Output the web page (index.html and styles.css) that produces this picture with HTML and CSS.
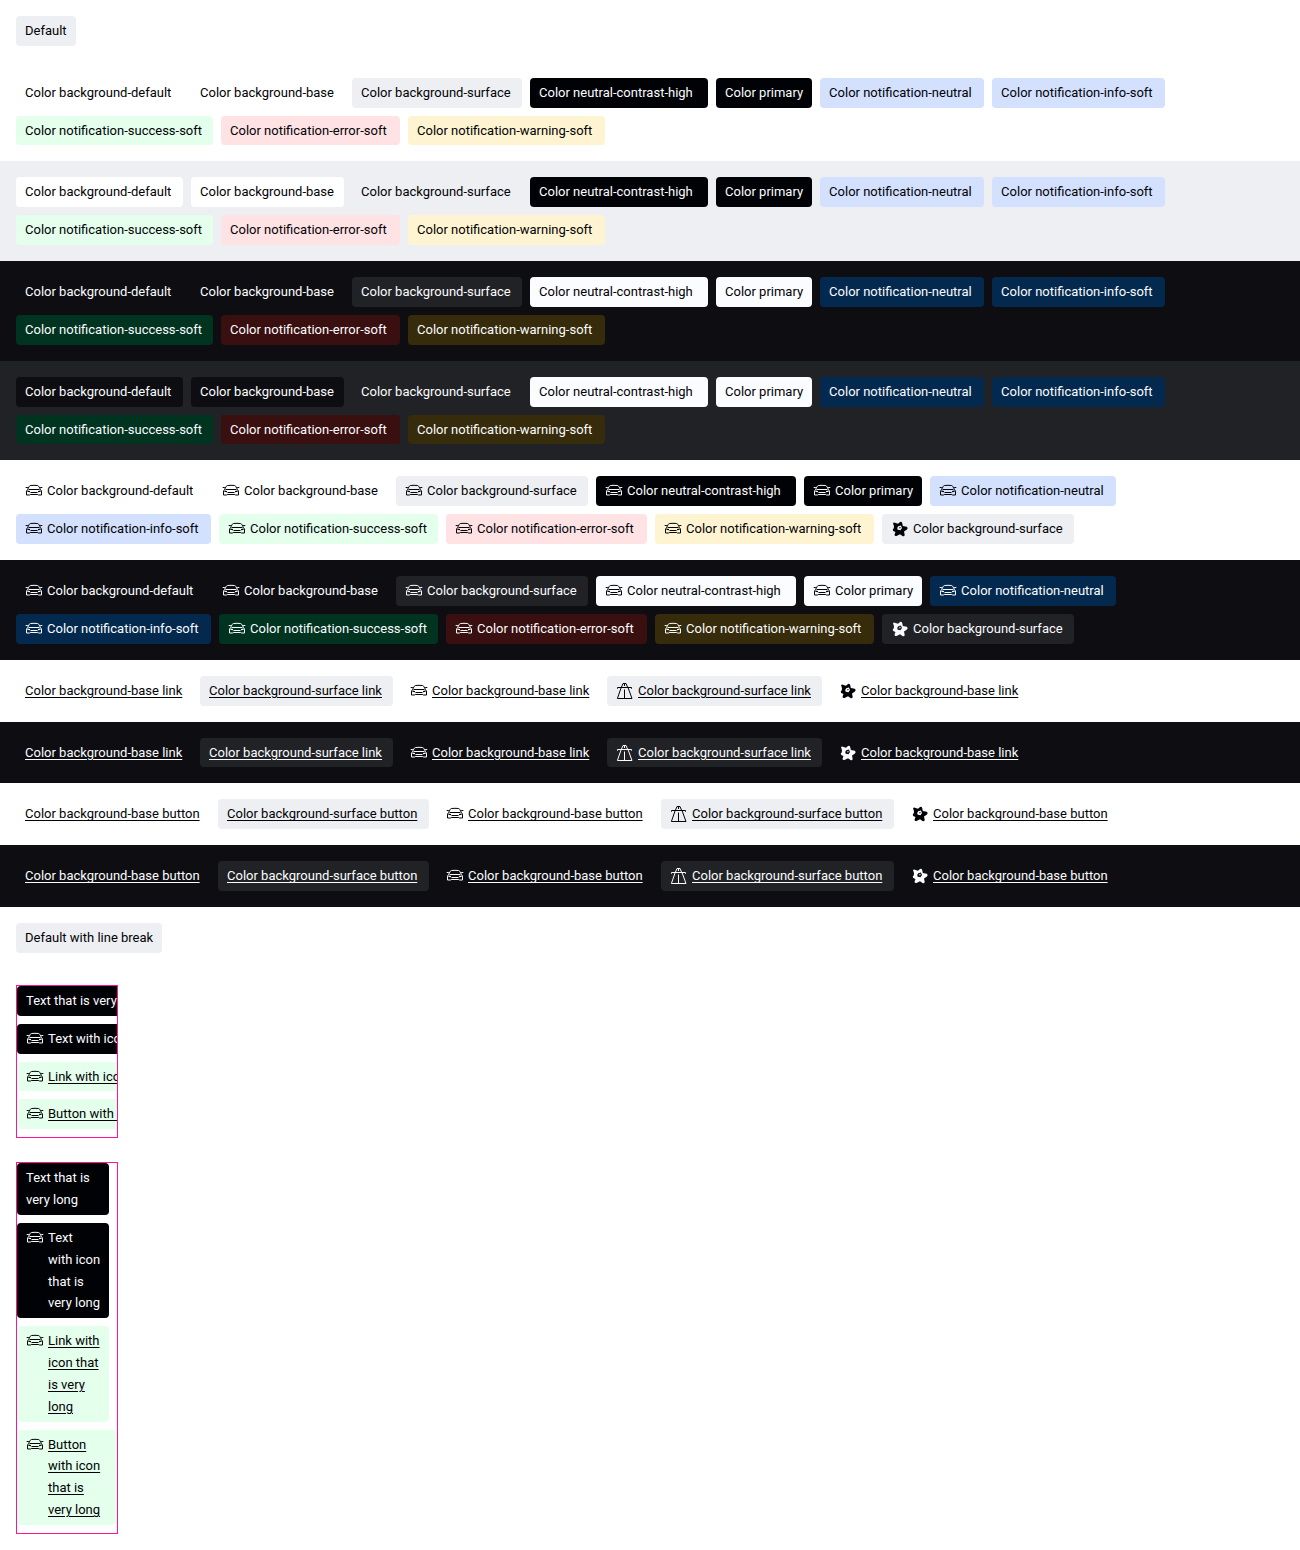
FILE: index.html
```html
<!DOCTYPE html>
<html lang="en">
<head>
<meta charset="utf-8">
<meta name="viewport" content="width=device-width, initial-scale=1">
<title>Tag</title>
<link rel="stylesheet" href="styles.css">
</head>
<body>
<svg class="sprite" aria-hidden="true">
  <symbol id="car" viewBox="0 0 18 18">
    <path d="M2.500 7.500 4.200 4.500Q4.500 3.700 5.500 3.500Q9 3.100 12.500 3.500Q13.500 3.700 13.800 4.500L15.500 7.500M.7 5.500H2.800M17.300 5.500H15.200M3.500 7.500H14.500M2.500 7.500Q1.500 8.500 1.500 10V13H4.500L5.200 12.500H12.800L13.500 13H16.500V10Q16.500 8.500 15.500 7.500M5.500 10.500H12.500" fill="none" stroke="currentColor"/>
    <path d="M2.400 8.400 5 9.100V10.200L2.300 9.700ZM15.600 8.400 13 9.100V10.200L15.700 9.700Z" fill="currentColor"/>
  </symbol>
  <symbol id="highway" viewBox="0 0 18 18">
    <path d="M1.500 6.700V5.500H15.500V6.700M5.200 5.500 1.400 16.500H16L12 5.500M5.300 5.500 7 1.500H10L11.700 5.500M8.500 2V4M8.500 7.500V16.500" fill="none" stroke="currentColor"/>
  </symbol>
  <symbol id="star" viewBox="0 0 18 18">
    <path fill="currentColor" fill-rule="evenodd" d="M2 3Q3 1.900 4.500 3L7 3.700 9 2Q11 1 11.300 3.500L11.800 6 15.800 6.800Q17.500 8 16 9.500L13 11.500 13.700 15Q13.200 17 11.500 16L9 14.300 5.500 16Q3.200 16.300 3.600 14.200L4.500 12 2.200 11Q1 9.500 2.800 8.300L3 6.300ZM7.200 6.300 9.900 5.600 11 8 9.500 10.300 6.700 9.700 6.200 8ZM8.200 7.200 9.400 7 9.600 8.100 8.500 8.500Z"/>
  </symbol>
</svg>
<main id="stage"></main>
<script src="tags.js"></script>
</body>
</html>
```
FILE: tags.js
```js
const COLORS = [
  'background-default', 'background-base', 'background-surface', 'neutral-contrast-high', 'primary',
  'notification-neutral', 'notification-info-soft', 'notification-success-soft',
  'notification-error-soft', 'notification-warning-soft'
];

const icon = name => name ? `<svg class="icon" aria-hidden="true"><use href="#${name}"/></svg>` : '';

function tag(label, color = 'background-surface', iconName = '', kind = 'text') {
  const body = {
    text: `<span class="label">${label}</span>`,
    link: `<a class="label" href="#">${label}</a>`,
    button: `<button class="label" type="button">${label}</button>`
  }[kind];
  return `<span class="tag ${color} tag-${kind}">${icon(iconName)}${body}</span>`;
}

const row = (theme, tags) => `<section class="row ${theme}">${tags.join('')}</section>`;
const swatches = (theme, tags) => row('swatches ' + theme, tags);
const plain = () => COLORS.map(c => tag('Color ' + c, c));
const withIcons = () => [
  ...COLORS.map(c => tag('Color ' + c, c, 'car')),
  tag('Color background-surface', 'background-surface', 'star')
];
const interactive = kind => [
  ['base', ''], ['surface', ''], ['base', 'car'], ['surface', 'highway'], ['base', 'star']
].map(([c, i]) => tag(`Color background-${c} ${kind}`, 'background-' + c, i, kind));
const longTags = () => [
  tag('Text that is very long', 'primary'),
  tag('Text with&nbsp;icon that is very long', 'primary', 'car'),
  tag('Link with icon that is very long', 'notification-success-soft', 'car', 'link'),
  tag('Button with icon that is very long', 'notification-success-soft', 'car', 'button')
].join('');

document.getElementById('stage').innerHTML = [
  row('light', [tag('Default')]),
  swatches('light', plain()),
  swatches('light on-surface', plain()),
  swatches('dark', plain()),
  swatches('dark on-surface', plain()),
  swatches('light', withIcons()),
  swatches('dark', withIcons()),
  swatches('light', interactive('link')),
  swatches('dark', interactive('link')),
  swatches('light', interactive('button')),
  swatches('dark', interactive('button')),
  row('light', [tag('Default with line break')]),
  `<section class="stack light">
    <div class="box nowrap">${longTags()}</div>
    <div class="box">${longTags()}</div>
  </section>`
].join('');
```
FILE: styles.css
```css
*, *::before, *::after { box-sizing: border-box; }

body {
  margin: 0;
  background: #fff;
  font-family: Roboto, "Liberation Sans", sans-serif;
  font-size: 13px;
  line-height: 1.68;
}

.sprite { position: absolute; width: 0; height: 0; }

.light {
  --base: #fff;
  --surface: #eeeff2;
  --primary: #010205;
  --inverse: #fbfcff;
  --info: #d3e1ff;
  --success: #e4ffec;
  --error: #ffe2e4;
  --warning: #fff4d2;
}

.dark {
  --base: #0e0e12;
  --surface: #212225;
  --primary: #fbfcff;
  --inverse: #010205;
  --info: #04294e;
  --success: #003320;
  --error: #3a0f0f;
  --warning: #362b0a;
}

.row {
  display: flex;
  flex-wrap: wrap;
  gap: 8px;
  padding: 16px;
  background: var(--base);
}

.on-surface { background: var(--surface); }

.tag {
  display: flex;
  align-items: flex-start;
  gap: 4px;
  padding: 4px 9px;
  border-radius: 4px;
  color: var(--primary);
  white-space: nowrap;
}

.background-default, .background-base { background: var(--base); }
.background-surface { background: var(--surface); }
.neutral-contrast-high, .primary { background: var(--primary); color: var(--inverse); }
.notification-neutral, .notification-info-soft { background: var(--info); }
.notification-success-soft { background: var(--success); }
.notification-error-soft { background: var(--error); }
.notification-warning-soft { background: var(--warning); }

.icon {
  flex: none;
  width: 18px;
  height: 18px;
  margin-top: 2px;
}

.label { color: inherit; }

.swatches .background-default .label { min-width: 149px; }
.swatches .background-base .label { min-width: 135px; }
.swatches .background-surface .label { min-width: 152px; }
.swatches .neutral-contrast-high .label { min-width: 160px; }
.swatches .primary .label { min-width: 78px; }
.swatches .notification-neutral .label { min-width: 146px; }
.swatches .notification-info-soft .label { min-width: 155px; }
.swatches .notification-success-soft .label,
.swatches .notification-warning-soft .label { min-width: 179px; }
.swatches .notification-error-soft .label { min-width: 161px; }
.swatches .background-base.tag-link .label { min-width: 158px; }
.swatches .background-surface.tag-link .label { min-width: 175px; }
.swatches .background-base.tag-button .label { min-width: 176px; }
.swatches .background-surface.tag-button .label { min-width: 193px; }

a.label, button.label {
  text-decoration: underline;
  text-underline-offset: 2px;
}

button.label {
  margin: 0;
  padding: 0;
  border: 0;
  background: none;
  font: inherit;
  text-align: left;
  cursor: pointer;
}

.stack {
  display: flex;
  flex-direction: column;
  align-items: flex-start;
  gap: 24px;
  padding: 16px;
}

.box {
  display: flex;
  flex-direction: column;
  gap: 8px;
  width: 102px;
  padding-bottom: 8px;
  border: 1px solid #ff1493;
  overflow: hidden;
}

.box .tag { margin-right: 8px; white-space: normal; }
.box .tag-button { margin-right: 0; }
.nowrap { align-items: flex-start; }
.nowrap .tag { margin-right: 0; white-space: nowrap; }
```
